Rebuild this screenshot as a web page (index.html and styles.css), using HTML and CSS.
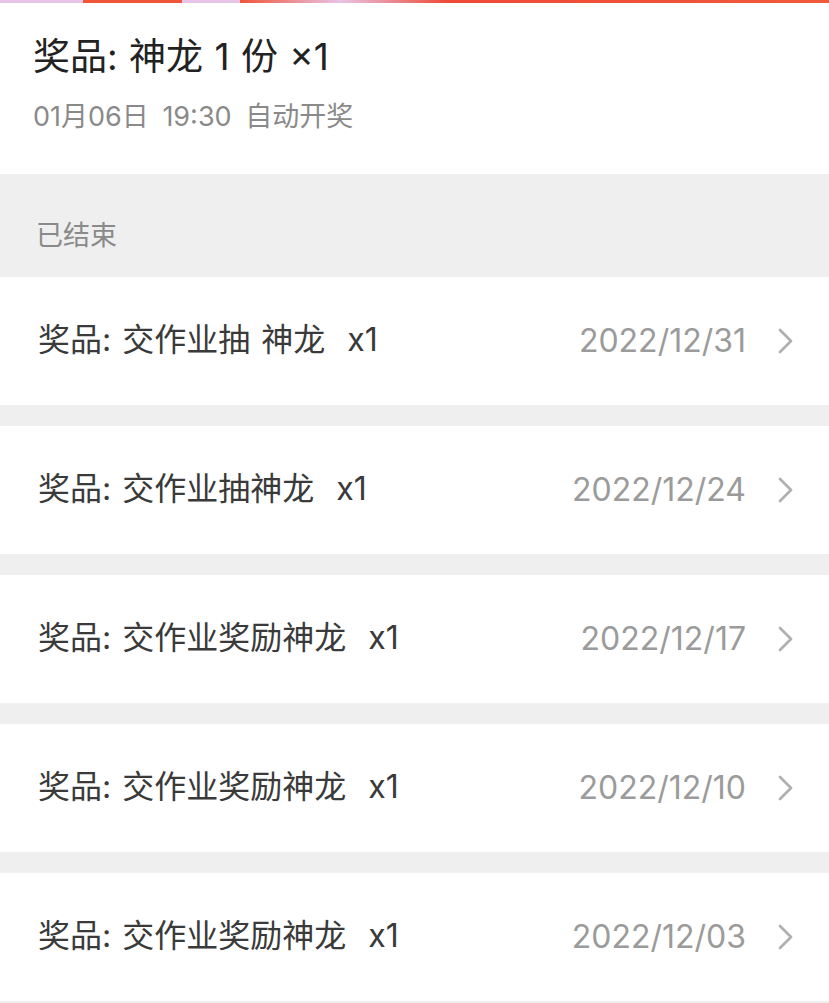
FILE: index.html
```html
<html>
<head>
<meta charset="utf-8">
<title>开奖记录</title>
<link rel="stylesheet" href="styles.css">
</head>
<body>
<div class="topbar"></div>
<div class="header">
    <div class="prize-title">奖品: 神龙 1 份 ×1</div>
    <div class="prize-time">01月06日 19:30 自动开奖</div>
</div>
<div class="section-label">已结束</div>
<div class="list">
    <div class="row">
        <span class="row-title">奖品: 交作业抽 神龙  x1</span>
        <span class="row-date">2022/12/31</span>
        <svg class="chevron" width="16" height="26" viewBox="0 0 16 26"><path d="M2 2 L13 13 L2 24" fill="none" stroke="#b0b0b0" stroke-width="2.8" stroke-linecap="round" stroke-linejoin="round"/></svg>
    </div>
    <div class="row">
        <span class="row-title">奖品: 交作业抽神龙  x1</span>
        <span class="row-date">2022/12/24</span>
        <svg class="chevron" width="16" height="26" viewBox="0 0 16 26"><path d="M2 2 L13 13 L2 24" fill="none" stroke="#b0b0b0" stroke-width="2.8" stroke-linecap="round" stroke-linejoin="round"/></svg>
    </div>
    <div class="row">
        <span class="row-title">奖品: 交作业奖励神龙  x1</span>
        <span class="row-date">2022/12/17</span>
        <svg class="chevron" width="16" height="26" viewBox="0 0 16 26"><path d="M2 2 L13 13 L2 24" fill="none" stroke="#b0b0b0" stroke-width="2.8" stroke-linecap="round" stroke-linejoin="round"/></svg>
    </div>
    <div class="row">
        <span class="row-title">奖品: 交作业奖励神龙  x1</span>
        <span class="row-date">2022/12/10</span>
        <svg class="chevron" width="16" height="26" viewBox="0 0 16 26"><path d="M2 2 L13 13 L2 24" fill="none" stroke="#b0b0b0" stroke-width="2.8" stroke-linecap="round" stroke-linejoin="round"/></svg>
    </div>
    <div class="row">
        <span class="row-title">奖品: 交作业奖励神龙  x1</span>
        <span class="row-date">2022/12/03</span>
        <svg class="chevron" width="16" height="26" viewBox="0 0 16 26"><path d="M2 2 L13 13 L2 24" fill="none" stroke="#b0b0b0" stroke-width="2.8" stroke-linecap="round" stroke-linejoin="round"/></svg>
    </div>
</div>
</body>
</html>
```

FILE: styles.css
```css
*
{
    margin: 0;
    padding: 0;
    box-sizing: border-box;
}
html, body
{
    width: 100%;
    height: 100%;
    background: #efefef;
    overflow: hidden;
}
body
{
    font-family: Inter, "Noto Sans CJK SC", sans-serif;
    color: #333;
}
.topbar
{
    height: 3px;
    background: linear-gradient(90deg, #e8c4e6 0, #e8c4e6 10%, #f0553a 10%, #f0553a 22%, #e8c4e6 22%, #e8c4e6 29%, #f0553a 29%, #e8c4e6 41%, #ee4a36 54%, #f05a3c 100%);
}
.header
{
    background: #fff;
    padding: 30px 33px 39px;
}
.prize-title
{
    font-size: 37px;
    line-height: 48px;
    color: #222;
    word-spacing: 1px;
}
.prize-time
{
    margin-top: 18px;
    font-size: 27px;
    line-height: 36px;
    color: #8a8a8a;
    word-spacing: 6px;
}
.section-label
{
    padding: 44px 36px 23px;
    font-size: 27px;
    line-height: 36px;
    color: #8a8a8a;
}
.list
{
    display: flex;
    flex-direction: column;
    gap: 21px;
}
.row
{
    height: 128px;
    background: #fff;
    display: flex;
    align-items: center;
    padding: 0 35px 0 38px;
}
.row-title
{
    flex: 1;
    font-size: 32px;
    line-height: 40px;
    margin-top: -3px;
    color: #3a3a3a;
    white-space: pre;
    word-spacing: 2px;
}
.row-date
{
    font-size: 32px;
    line-height: 40px;
    margin-top: -1px;
    color: #9b9b9b;
}
.chevron
{
    margin-left: 32px;
}
```
